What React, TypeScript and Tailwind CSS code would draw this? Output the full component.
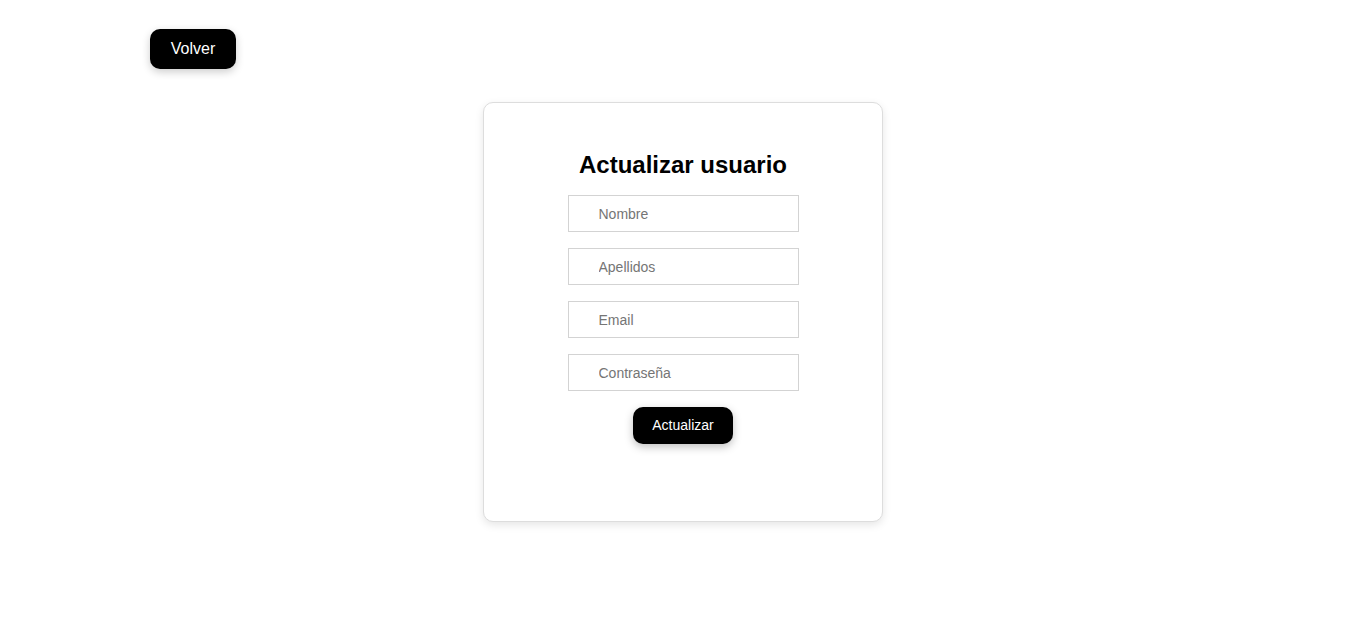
import React from "react";

export default function App() {
  const fields = ["Nombre", "Apellidos", "Email", "Contraseña"];
  return (
    <div className="min-h-screen bg-white font-['Liberation_Sans',Arial,sans-serif]">
      <div className="pl-[150px] pt-[29px]">
        <button className="h-[40px] w-[86px] rounded-[10px] bg-black text-[16px] text-white shadow-[0_3px_8px_rgba(0,0,0,0.2)]">
          Volver
        </button>
      </div>
      <div className="mt-[33px] flex justify-center">
        <div className="flex h-[420px] w-[400px] flex-col items-center rounded-[10px] border border-[#dddddd] bg-white pt-12 shadow-[0_3px_8px_rgba(0,0,0,0.1)]">
          <h2 className="mb-4 text-[24px] font-bold leading-[28px] text-black">Actualizar usuario</h2>
          <div className="flex flex-col gap-4">
            {fields.map((f) => (
              <input
                key={f}
                placeholder={f}
                className="h-[37px] w-[231px] border border-[#d3d3d3] pl-[30px] text-[14px] text-black outline-none placeholder:text-[#757575]"
              />
            ))}
          </div>
          <button className="mt-4 h-[37px] w-[100px] rounded-[10px] bg-black text-[14px] text-white shadow-[0_3px_8px_rgba(0,0,0,0.25)]">
            Actualizar
          </button>
        </div>
      </div>
    </div>
  );
}
